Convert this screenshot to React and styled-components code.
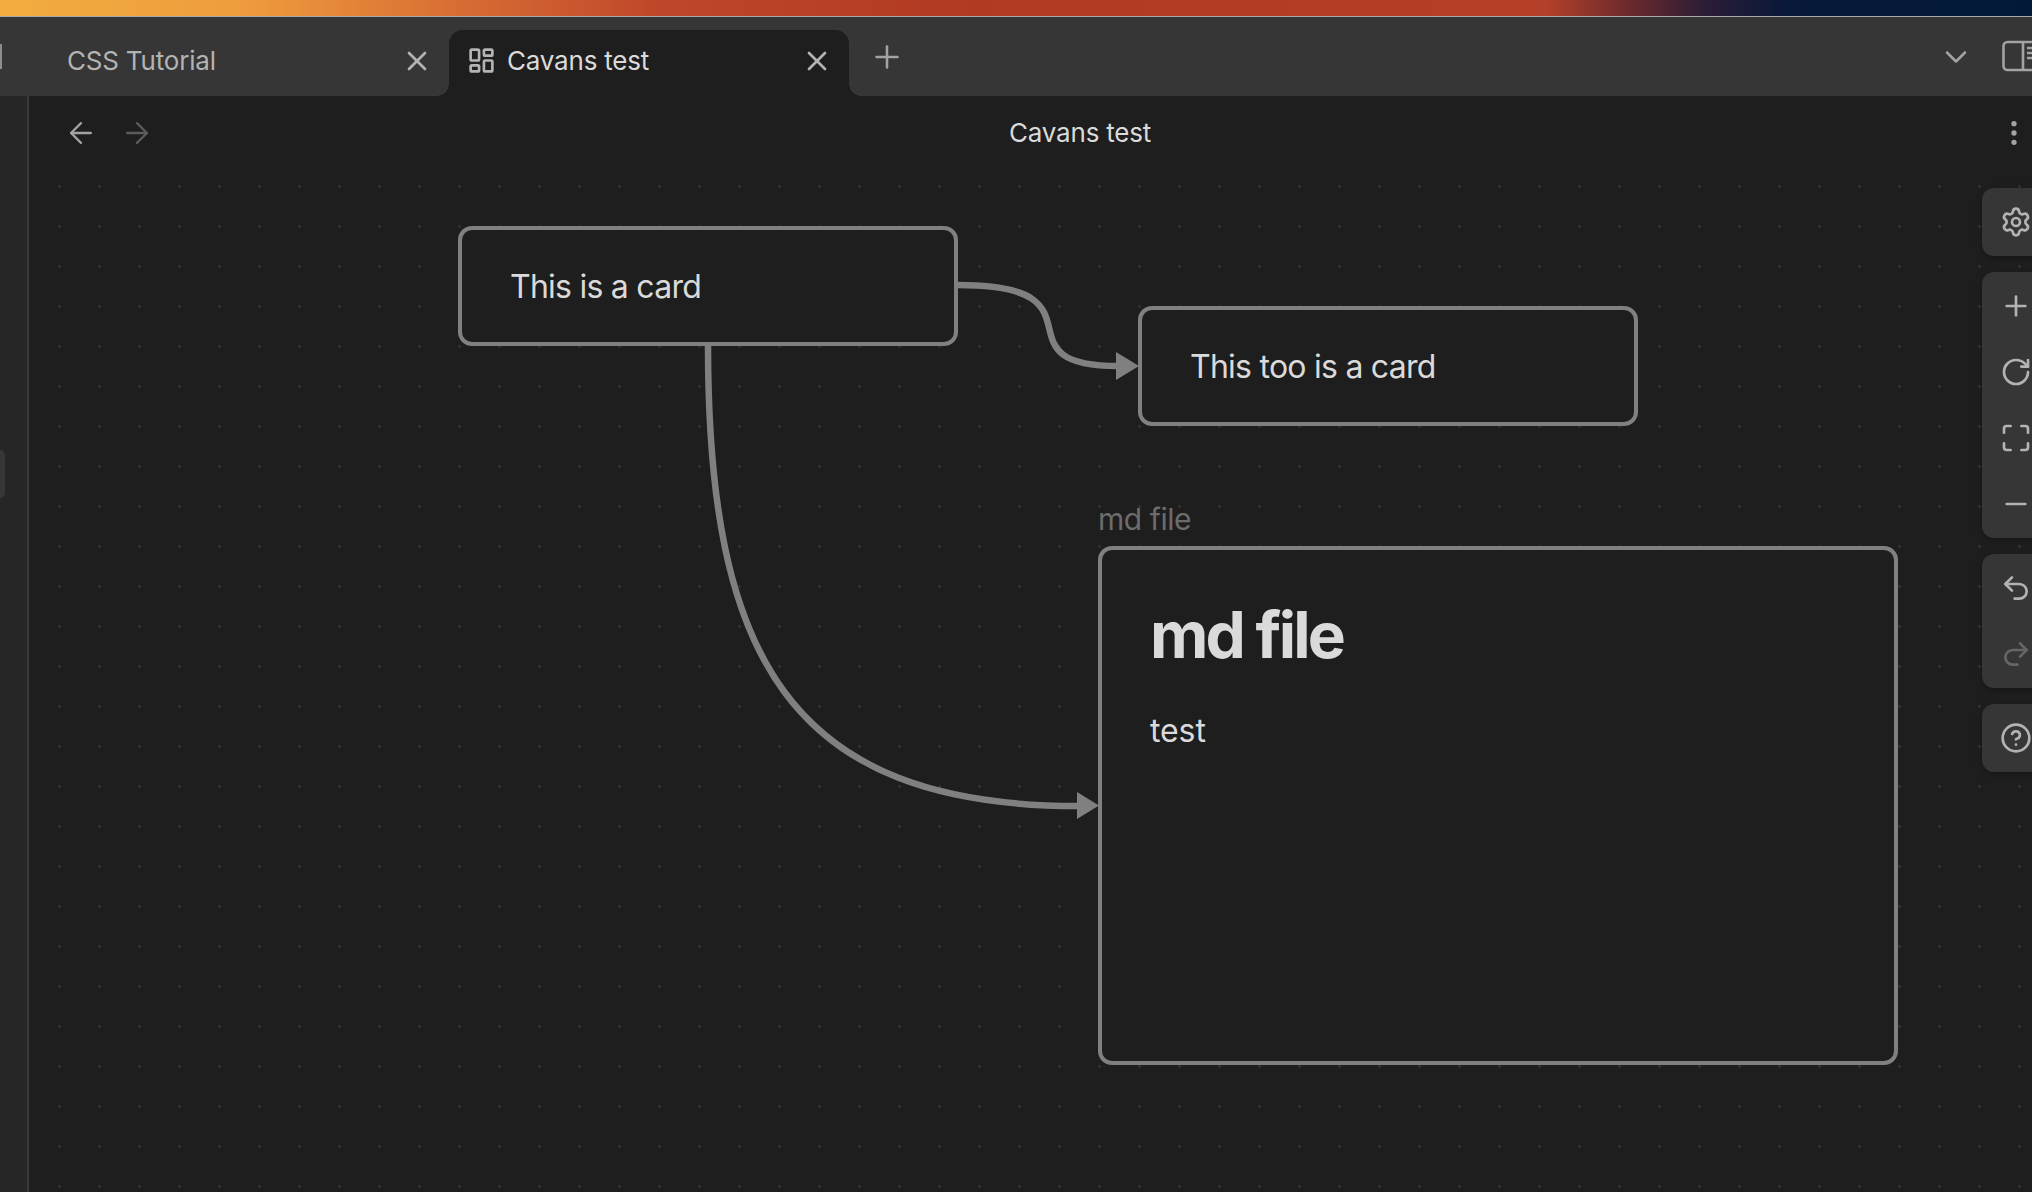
import styled, { createGlobalStyle } from "styled-components";
import {
  ArrowLeft,
  ArrowRight,
  ChevronDown,
  CircleHelp,
  LayoutDashboard,
  Maximize,
  Minus,
  MoreVertical,
  Plus,
  Redo2,
  RotateCw,
  Settings,
  Undo2,
  X,
} from "lucide-react";

const GlobalStyle = createGlobalStyle`
  html, body {
    margin: 0;
    padding: 0;
    background: #1e1e1e;
  }
  * {
    box-sizing: border-box;
  }
`;

// canvas starts here in page coordinates, nodes and edges below are given in page coordinates
const ORIGIN = { x: 29, y: 170 };

const toolGroups = [
  [{ icon: Settings, key: "settings" }],
  [
    { icon: Plus, key: "zoom-in" },
    { icon: RotateCw, key: "reset" },
    { icon: Maximize, key: "fit" },
    { icon: Minus, key: "zoom-out" },
  ],
  [
    { icon: Undo2, key: "undo" },
    { icon: Redo2, key: "redo", dim: true },
  ],
  [{ icon: CircleHelp, key: "help" }],
];

export default function App() {
  return (
    <Page>
      <GlobalStyle />
      <Wallpaper />
      <TabBar>
        <SidebarStub />
        <Tab>
          <TabTitle>CSS Tutorial</TabTitle>
          <CloseIcon size={32} strokeWidth={2} />
        </Tab>
        <Tab $active>
          <CanvasIcon size={29} strokeWidth={2.2} />
          <TabTitle $active>Cavans test</TabTitle>
          <CloseIcon size={32} strokeWidth={2} />
        </Tab>
        <NewTab>
          <Plus size={36} strokeWidth={1.7} />
        </NewTab>
        <TabActions>
          <ChevronDown size={36} strokeWidth={1.7} />
          <svg width="44" height="32" viewBox="0 0 44 32" fill="none" stroke="currentColor" strokeWidth="2.6">
            <rect x="1.5" y="2" width="50" height="28" rx="4" />
            <path d="M21 2v28M25 8h14M25 13h14M25 18h14" />
          </svg>
        </TabActions>
      </TabBar>
      <Main>
        <SideDock>
          <DockHandle />
        </SideDock>
        <View>
          <ViewHeader>
            <Nav>
              <ArrowLeft size={34} strokeWidth={1.6} color="#a3a3a3" />
              <ArrowRight size={34} strokeWidth={1.6} color="#5c5c5c" />
            </Nav>
            <ViewTitle>Cavans test</ViewTitle>
            <MoreButton>
              <MoreVertical size={32} strokeWidth={2} />
            </MoreButton>
          </ViewHeader>
          <Canvas>
            <Edges width="2032" height="1192" viewBox="0 0 2032 1192">
              <g transform={`translate(${-ORIGIN.x} ${-ORIGIN.y})`}>
                <EdgePath d="M958 285 C1112 285 992 366 1118 366" />
                <polygon points="1116,352 1139,366 1116,380" fill="#808080" />
                <EdgePath d="M708 345 C708 655 788 806 1078 806" />
                <polygon points="1077,792 1099,805.5 1077,819" fill="#808080" />
              </g>
            </Edges>
            <Node $x={458} $y={226} $w={500} $h={120}>
              <NodeText>This is a card</NodeText>
            </Node>
            <Node $x={1138} $y={306} $w={500} $h={120}>
              <NodeText>This too is a card</NodeText>
            </Node>
            <FileNode $x={1098} $y={546} $w={800} $h={519}>
              <FileLabel>md file</FileLabel>
              <FileHeading>md file</FileHeading>
              <FileBody>test</FileBody>
            </FileNode>
            <Controls>
              {toolGroups.map((group) => (
                <ControlGroup key={group[0].key}>
                  {group.map(({ icon: Icon, key, dim }) => (
                    <ControlButton key={key} $dim={dim}>
                      <Icon size={32} strokeWidth={2} />
                    </ControlButton>
                  ))}
                </ControlGroup>
              ))}
            </Controls>
          </Canvas>
        </View>
      </Main>
    </Page>
  );
}

const Page = styled.div`
  width: 2032px;
  height: 1192px;
  overflow: hidden;
  display: flex;
  flex-direction: column;
  background: #1e1e1e;
  font-family: "Inter", "Liberation Sans", sans-serif;
`;

const Wallpaper = styled.div`
  height: 17px;
  flex-shrink: 0;
  border-bottom: 1px solid #a8a8a8;
  background: linear-gradient(
    90deg,
    #f2ad40 0%,
    #ee9c3d 12%,
    #d96f34 22%,
    #bf482a 32%,
    #b03a22 48%,
    #b23c25 60%,
    #b5402a 76%,
    #6e2b2c 80%,
    #2a1c36 84%,
    #08193a 88%,
    #021a38 100%
  );
`;

const TabBar = styled.div`
  height: 79px;
  flex-shrink: 0;
  display: flex;
  align-items: flex-end;
  padding-left: 49px;
  background: #363636;
  position: relative;
`;

const SidebarStub = styled.span`
  position: absolute;
  left: 0;
  top: 27px;
  width: 2px;
  height: 25px;
  background: #8c8c8c;
`;

const Tab = styled.div`
  width: 400px;
  height: 66px;
  flex-shrink: 0;
  display: flex;
  align-items: center;
  gap: 10px;
  padding: 0 16px 5px ${({ $active }) => ($active ? "16px" : "18px")};
  position: relative;
  border-radius: 14px 14px 0 0;
  background: ${({ $active }) => ($active ? "#1e1e1e" : "transparent")};

  ${({ $active }) =>
    $active &&
    `
    &::before, &::after {
      content: "";
      position: absolute;
      bottom: 0;
      width: 12px;
      height: 12px;
    }
    &::before {
      left: -12px;
      background: radial-gradient(circle at 0 0, transparent 11.5px, #1e1e1e 12px);
    }
    &::after {
      right: -12px;
      background: radial-gradient(circle at 100% 0, transparent 11.5px, #1e1e1e 12px);
    }
  `}
`;

const CanvasIcon = styled(LayoutDashboard)`
  flex-shrink: 0;
  margin: 0 1.5px;
  color: #b4b4b4;
`;

const TabTitle = styled.span`
  flex: 1;
  font-size: 26px;
  letter-spacing: -0.2px;
  color: ${({ $active }) => ($active ? "#dadada" : "#b3b3b3")};
`;

const CloseIcon = styled(X)`
  color: #b3b3b3;
  flex-shrink: 0;
`;

const NewTab = styled.div`
  align-self: flex-start;
  display: flex;
  margin: 22px 0 0 20px;
  color: #a3a3a3;
`;

const TabActions = styled.div`
  align-self: flex-start;
  display: flex;
  align-items: flex-start;
  gap: 28px;
  margin: 22px -14px 0 auto;
  color: #a3a3a3;

  svg {
    flex-shrink: 0;
  }
  svg:last-child {
    margin-top: 1px;
  }
`;

const Main = styled.div`
  flex: 1;
  display: flex;
  min-height: 0;
`;

const SideDock = styled.div`
  width: 29px;
  flex-shrink: 0;
  padding-top: 354px;
  background: #262626;
  border-right: 2px solid #3a3a3a;
`;

const DockHandle = styled.div`
  width: 5px;
  height: 48px;
  background: #363636;
  border-radius: 0 6px 6px 0;
`;

const View = styled.div`
  flex: 1;
  display: flex;
  flex-direction: column;
  min-width: 0;
`;

const ViewHeader = styled.div`
  height: 74px;
  flex-shrink: 0;
  display: grid;
  grid-template-columns: 945px auto 1fr;
  align-items: center;
  padding: 0 2px 0 35px;
`;

const Nav = styled.div`
  display: flex;
  gap: 22px;
`;

const ViewTitle = styled.div`
  font-size: 26px;
  letter-spacing: -0.2px;
  margin-bottom: 2px;
  color: #dadada;
`;

const MoreButton = styled.div`
  justify-self: end;
  display: flex;
  color: #a3a3a3;
`;

const Canvas = styled.div`
  flex: 1;
  position: relative;
  background-color: #1e1e1e;
  background-image: radial-gradient(circle, #404040 1px, transparent 1.4px);
  background-size: 40px 40px;
  background-position: 10.5px -3.5px;
`;

const Edges = styled.svg`
  position: absolute;
  left: 0;
  top: 0;
  pointer-events: none;
`;

const EdgePath = styled.path`
  fill: none;
  stroke: #808080;
  stroke-width: 6.5;
`;

const Node = styled.div`
  position: absolute;
  left: ${({ $x }) => $x - ORIGIN.x}px;
  top: ${({ $y }) => $y - ORIGIN.y}px;
  width: ${({ $w }) => $w}px;
  height: ${({ $h }) => $h}px;
  display: flex;
  align-items: center;
  padding: 0 48px;
  background: #1e1e1e;
  border: 4px solid #808080;
  border-radius: 14px;
`;

const NodeText = styled.div`
  font-size: 32px;
  letter-spacing: -0.75px;
  color: #dadada;
`;

const FileNode = styled(Node)`
  display: block;
  padding: 0 48px;
`;

const FileLabel = styled.div`
  position: absolute;
  left: -4px;
  top: -49px;
  font-size: 30px;
  letter-spacing: -0.45px;
  color: #6c6c6c;
`;

const FileHeading = styled.h1`
  margin: 47px 0 0;
  font-size: 64px;
  line-height: 1.2;
  font-weight: 700;
  letter-spacing: -2.8px;
  color: #dadada;
`;

const FileBody = styled.p`
  margin: 33px 0 0;
  font-size: 32px;
  line-height: 1.5;
  letter-spacing: -0.1px;
  color: #dadada;
`;

const Controls = styled.div`
  position: absolute;
  left: 1953px;
  top: 18px;
  display: flex;
  flex-direction: column;
  gap: 16px;
`;

const ControlGroup = styled.div`
  width: 68px;
  padding: 1px 0;
  background: #363636;
  border-radius: 12px;
  box-shadow: 0 2px 6px rgba(0, 0, 0, 0.25);
`;

const ControlButton = styled.div`
  height: 66px;
  display: flex;
  align-items: center;
  justify-content: center;
  color: ${({ $dim }) => ($dim ? "#666666" : "#b3b3b3")};
`;
